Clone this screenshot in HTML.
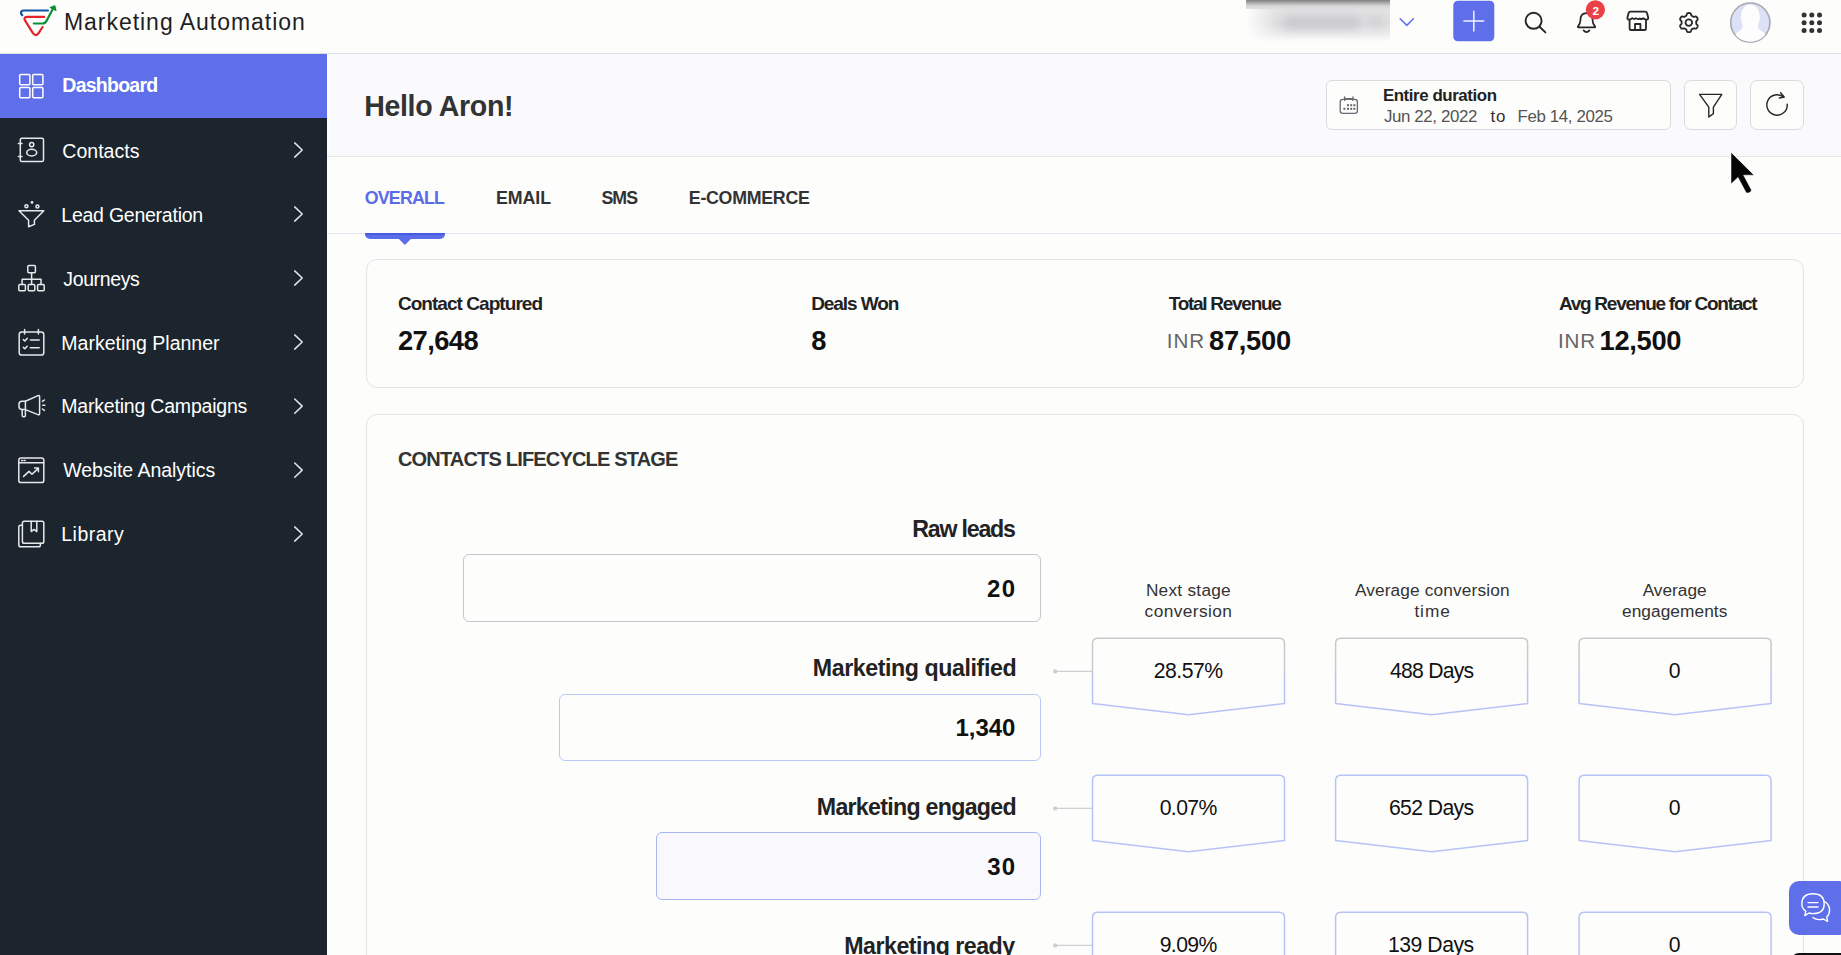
<!DOCTYPE html>
<html lang="en">
<head>
<meta charset="utf-8">
<title>Marketing Automation</title>
<style>
*{box-sizing:border-box;margin:0;padding:0}
html,body{width:1841px;height:955px;overflow:hidden;background:#fdfdfc;font-family:"Liberation Sans",sans-serif}
#app{position:relative;width:1841px;height:955px;overflow:hidden;background:#fdfdfc}
.abs{position:absolute}
.t{position:absolute;white-space:nowrap;line-height:1}
#topbar{left:0;top:0;width:1841px;height:54px;background:#fdfdfc;border-bottom:1px solid #dedfe6}
#side{left:0;top:54px;width:327px;height:901px;background:#1c252d}
#active{left:0;top:54px;width:327px;height:64px;background:#5f6fe9}
#hdr{left:327px;top:54px;width:1514px;height:103px;background:#fafafc;border-bottom:1px solid #e6e6e7;box-shadow:inset 2px 0 0 #fdfdfe}
#tabline{left:327px;top:233.2px;width:1514px;height:1.3px;background:#e6e7f5}
#tabind{left:365px;top:233px;width:80px;height:5.5px;background:linear-gradient(#4459e2 0,#4a5ee3 1.8px,#5c6de8 2.6px);border-radius:0 0 5px 5px}
#tabtri{left:398.4px;top:238.3px;width:0;height:0;border-left:6.5px solid transparent;border-right:6.5px solid transparent;border-top:6.5px solid #5b6be8}
.card{border:1.5px solid #e4e4e7;border-radius:11px;background:#fdfdfc}
#stats{left:365.5px;top:258.5px;width:1438.5px;height:129px}
#life{left:365.5px;top:414px;width:1438.5px;height:600px}
.fbox{border-radius:6px;border:1.5px solid #c5c6c9;background:#fdfdfc}
.btn{border:1.5px solid #dbdbde;border-radius:7px;background:#fdfdfc}
svg{position:absolute;overflow:visible}
</style>
</head>
<body>
<div id="app">
<div id="topbar" class="abs"></div>
<div id="side" class="abs"></div>
<div id="active" class="abs"></div>
<div id="hdr" class="abs"></div>
<div id="tabline" class="abs"></div>
<div id="tabind" class="abs"></div>
<div id="stats" class="abs card"></div>
<div id="life" class="abs card"></div>

<!-- blurred account name -->
<div class="abs" style="left:1246px;top:0;width:144px;height:42px;background:linear-gradient(to bottom,#7f7f7f 0,#adadad 3px,#d6d6d7 6px,#e3e3e5 10px,#dfdfe1 24px,#ececee 34px,#fdfdfc 42px);-webkit-mask-image:linear-gradient(to right,transparent 0,#000 0);"></div>
<div class="abs" style="left:1246px;top:9px;width:30px;height:34px;background:linear-gradient(to right,#fdfdfc,rgba(253,253,252,0));"></div>
<div class="abs" style="left:1282px;top:16px;width:80px;height:13px;border-radius:7px;background:#c9c9cb;filter:blur(5px)"></div>
<div class="abs" style="left:1368px;top:17px;width:16px;height:10px;border-radius:5px;background:#cfcfd1;filter:blur(4px)"></div>

<!-- date picker + buttons -->
<div class="abs btn" style="left:1325.5px;top:79.8px;width:345.5px;height:50.6px;border-radius:6px"></div>
<div class="abs btn" style="left:1684.2px;top:79.8px;width:53.3px;height:50.6px"></div>
<div class="abs btn" style="left:1750.4px;top:79.8px;width:53.3px;height:50.6px"></div>

<!-- funnel boxes -->
<div class="abs fbox" style="left:463px;top:554.4px;width:578.2px;height:67.8px"></div>
<div class="abs fbox" style="left:559.4px;top:693.5px;width:481.8px;height:67.5px;border-color:#bcc7f6"></div>
<div class="abs fbox" style="left:655.6px;top:832.2px;width:385.8px;height:67.4px;border:1.75px solid #a8b6f4;background:#f9f9fd"></div>

<!-- chat button -->
<div class="abs" style="left:1789px;top:881px;width:60px;height:53.5px;border-radius:10px;background:#5f6fe9"></div>
<div class="abs" style="left:1791px;top:952.5px;width:60px;height:20px;border-radius:8px;background:#111"></div>

<svg width="1841" height="955" viewBox="0 0 1841 955" style="left:0;top:0" fill="none" stroke-linecap="round" stroke-linejoin="round">
<defs>
<linearGradient id="gb" x1="0" y1="0" x2="0" y2="1" gradientUnits="objectBoundingBox">
<stop offset="0" stop-color="#c9c9cb"/><stop offset="0.42" stop-color="#c9cacf"/><stop offset="0.5" stop-color="#b7c3f6"/><stop offset="1" stop-color="#b7c3f6"/>
</linearGradient>
<clipPath id="avc"><circle cx="1750.3" cy="22.6" r="19.2"/></clipPath>
</defs>

<path d="M398.2 238.2H411.6L404.9 244.9Z" fill="#5c6de8" stroke="none"/>
<!-- logo -->
<g stroke-width="2.2">
<path d="M48 10.5H23.6Q21 10.5 21 13Q21 14.4 22.3 15.2" stroke="#0f54a6"/>
<path d="M44.2 16.9H27.4Q23.2 16.9 25 20.4L32.6 32.6Q35.8 37.4 38.6 33.2L42.6 27" stroke="#e3232a"/>
<path d="M33.8 23.5H42.6Q45.4 23.5 46.6 20.8L53.2 8.2" stroke="#0a8f36"/>
<path d="M50.2 7.5L54.8 5.8L56 10.4Z" stroke="#0a8f36" fill="#0a8f36" stroke-width="1.1"/>
</g>

<!-- sidebar icons -->
<g stroke="#e6e8ea" stroke-width="1.5">
<!-- dashboard -->
<g stroke="#ffffff"><rect x="19.7" y="74.6" width="10.2" height="10.2" rx="1"/><rect x="32.7" y="74.6" width="10.2" height="10.2" rx="1"/><rect x="19.7" y="87.6" width="10.2" height="10.2" rx="1"/><rect x="32.7" y="87.6" width="10.2" height="10.2" rx="1"/></g>
<!-- contacts -->
<rect x="20.3" y="138.2" width="23.2" height="23.4" rx="1.6"/>
<path d="M18.4 143.4h3.6M18.4 156.4h3.6"/>
<circle cx="31.7" cy="144.6" r="2.1"/>
<ellipse cx="31.7" cy="152.6" rx="5" ry="3.3"/>
<!-- lead gen funnel -->
<path d="M19 210.8H43.8L34.4 220.2V224.4L28.6 226.8V220.2Z"/>
<circle cx="26.4" cy="206.3" r="1.5"/><circle cx="37.4" cy="206.5" r="1.5"/><circle cx="32" cy="202.4" r="0.7" fill="#e6e8ea"/>
<!-- journeys -->
<rect x="27.8" y="265.6" width="7.6" height="7.2" rx="1"/>
<rect x="18.8" y="284.4" width="6.6" height="6.4" rx="1"/><rect x="28.2" y="284.4" width="6.6" height="6.4" rx="1"/><rect x="37.6" y="284.4" width="6.6" height="6.4" rx="1"/>
<path d="M31.6 272.8V284.4M22.1 284.4V279.2H41V284.4"/>
<!-- planner -->
<rect x="19.2" y="332" width="24.6" height="23" rx="2.6"/>
<path d="M24.6 329.6V334M38.4 329.6V334"/>
<path d="M23.4 339.6l1.4 1.4l2.4-2.6M23.4 347.4l1.4 1.4l2.4-2.6M30.4 340h8.8M30.4 347.8h8.8"/>
<!-- campaigns megaphone -->
<path d="M25.4 401.2L38 395.6Q39.6 395 39.6 396.8V413.4Q39.6 415.2 38 414.6L25.4 409.6Z"/>
<path d="M25.4 401.2H22Q19 401.2 19 404.2V406.6Q19 409.6 22 409.6H25.4"/>
<path d="M22.2 409.6V415.6Q22.2 416.8 23.4 416.8H24.2Q25.4 416.8 25.4 415.6V409.6"/>
<path d="M42.4 401.4L44.4 400M42.8 405.2H44.8M42.4 409L44.4 410.4"/>
<!-- analytics -->
<rect x="18.8" y="458" width="25" height="24.6" rx="2.2"/>
<path d="M18.8 462.8H43.8M21.6 460.4h1M24.2 460.4h1"/>
<path d="M23.6 476.4L29 471.4L32 474.2L38.2 468.4M34.6 468H38.4V471.8"/>
<!-- library -->
<path d="M22.4 525.2H20.6Q18.8 525.2 18.8 527V545Q18.8 546.8 20.6 546.8H38.6Q40.4 546.8 40.4 545V543.2"/>
<rect x="22.4" y="521.2" width="21.4" height="22" rx="1.8"/>
<path d="M31.2 521.2V531.6L34 529.4L36.8 531.6V521.2"/>
</g>

<!-- sidebar chevrons -->
<g stroke="#e3e5e7" stroke-width="1.5">
<path d="M294.7 142.9L302.2 150.0L294.7 157.1"/>
<path d="M294.7 206.9L302.2 214.0L294.7 221.1"/>
<path d="M294.7 270.9L302.2 278.0L294.7 285.1"/>
<path d="M294.7 334.9L302.2 342.0L294.7 349.1"/>
<path d="M294.7 399.0L302.2 406.1L294.7 413.2"/>
<path d="M294.7 463.0L302.2 470.1L294.7 477.2"/>
<path d="M294.7 526.9L302.2 534.0L294.7 541.1"/>
</g>

<!-- topbar icons -->
<path d="M1400.2 18.8L1406.8 25.4L1413.4 18.8" stroke="#6474ea" stroke-width="1.6"/>
<rect x="1453.3" y="0.8" width="41" height="40.5" rx="4.5" fill="#5f6fe9"/>
<path d="M1473.8 11.2V31M1463.9 21.1H1483.7" stroke="#f4f5ff" stroke-width="1.5"/>
<circle cx="1533.6" cy="20.8" r="8" stroke="#262626" stroke-width="1.9"/>
<path d="M1539.6 26.8L1545.4 32.4" stroke="#262626" stroke-width="1.9"/>
<!-- bell -->
<path d="M1578.4 27.4H1594.6Q1595.6 27.4 1595 26.4Q1592.6 23.6 1592.6 20.4Q1592.6 13.2 1586.5 13.2Q1580.4 13.2 1580.4 20.4Q1580.4 23.6 1578 26.4Q1577.4 27.4 1578.4 27.4Z" stroke="#262626" stroke-width="1.7"/>
<path d="M1583.6 30.4Q1586.5 34 1589.4 30.4" stroke="#262626" stroke-width="1.7"/>
<circle cx="1595.4" cy="9.8" r="9.6" fill="#ea4048"/>
<!-- store -->
<g stroke="#262626" stroke-width="1.8">
<path d="M1630.6 11.6H1645Q1646.6 11.6 1647 13L1648.2 17.6Q1648.4 19.4 1646.8 19.6Q1644.6 19.8 1643.2 18.2Q1641.8 19.8 1639.8 18.4Q1637.8 19.8 1636 18.2Q1634.2 19.8 1632.4 18.2Q1630.8 19.8 1628.8 19.6Q1627.2 19.4 1627.4 17.6L1628.6 13Q1629 11.6 1630.6 11.6Z"/>
<path d="M1629.6 20.2V28.4Q1629.6 30 1631.2 30H1644.4Q1646 30 1646 28.4V20.2"/>
<path d="M1635 30V24H1640.4V30"/>
</g>
<!-- gear -->
<g stroke="#262626" stroke-width="1.8">
<path id="gear" d="M1696.20 22.60L1696.20 22.22L1696.20 21.83L1696.24 21.44L1696.48 20.99L1697.06 20.41L1697.60 19.77L1697.73 19.21L1697.64 18.71L1697.45 18.24L1697.21 17.80L1696.95 17.38L1696.64 16.98L1696.25 16.64L1695.70 16.48L1694.88 16.62L1694.09 16.84L1693.58 16.82L1693.21 16.66L1692.88 16.47L1692.55 16.28L1692.22 16.09L1691.88 15.90L1691.56 15.66L1691.30 15.23L1691.09 14.44L1690.80 13.65L1690.38 13.25L1689.90 13.09L1689.40 13.02L1688.90 13.00L1688.40 13.02L1687.90 13.09L1687.42 13.25L1687.00 13.65L1686.71 14.44L1686.50 15.23L1686.24 15.66L1685.92 15.90L1685.58 16.09L1685.25 16.28L1684.92 16.47L1684.59 16.66L1684.22 16.82L1683.71 16.84L1682.92 16.62L1682.10 16.48L1681.55 16.64L1681.16 16.98L1680.85 17.38L1680.59 17.80L1680.35 18.24L1680.16 18.71L1680.07 19.21L1680.20 19.77L1680.74 20.41L1681.32 20.99L1681.56 21.44L1681.60 21.83L1681.60 22.22L1681.60 22.60L1681.60 22.98L1681.60 23.37L1681.56 23.76L1681.32 24.21L1680.74 24.79L1680.20 25.43L1680.07 25.99L1680.16 26.49L1680.35 26.96L1680.59 27.40L1680.85 27.82L1681.16 28.22L1681.55 28.56L1682.10 28.72L1682.92 28.58L1683.71 28.36L1684.22 28.38L1684.59 28.54L1684.92 28.73L1685.25 28.92L1685.58 29.11L1685.92 29.30L1686.24 29.54L1686.50 29.97L1686.71 30.76L1687.00 31.55L1687.42 31.95L1687.90 32.11L1688.40 32.18L1688.90 32.20L1689.40 32.18L1689.90 32.11L1690.38 31.95L1690.80 31.55L1691.09 30.76L1691.30 29.97L1691.56 29.54L1691.88 29.30L1692.22 29.11L1692.55 28.92L1692.88 28.73L1693.21 28.54L1693.58 28.38L1694.09 28.36L1694.88 28.58L1695.70 28.72L1696.25 28.56L1696.64 28.22L1696.95 27.82L1697.21 27.40L1697.45 26.96L1697.64 26.49L1697.73 25.99L1697.60 25.43L1697.06 24.79L1696.48 24.21L1696.24 23.76L1696.20 23.37L1696.20 22.98Z"/>
<circle cx="1688.8" cy="22.6" r="3.3"/>
</g>
<!-- avatar -->
<circle cx="1750.3" cy="22.6" r="19.6" fill="#dde1f8" stroke="#a9a9ad" stroke-width="1.6"/>
<g clip-path="url(#avc)" fill="#fdfdfe" stroke="none">
<ellipse cx="1750.3" cy="17" rx="9.6" ry="12.4"/>
<path d="M1742.6 24Q1743.6 29 1738.6 31.4Q1734 33.4 1733 45H1768Q1767 33.4 1762.2 31.4Q1757 29 1758 24Z"/>
</g>
<!-- 9 dots -->
<g fill="#333" stroke="none">
<circle cx="1804.1" cy="15.1" r="2.5"/><circle cx="1811.8" cy="15.1" r="2.5"/><circle cx="1819.5" cy="15.1" r="2.5"/>
<circle cx="1804.1" cy="22.7" r="2.5"/><circle cx="1811.8" cy="22.7" r="2.5"/><circle cx="1819.5" cy="22.7" r="2.5"/>
<circle cx="1804.1" cy="30.4" r="2.5"/><circle cx="1811.8" cy="30.4" r="2.5"/><circle cx="1819.5" cy="30.4" r="2.5"/>
</g>

<!-- calendar -->
<g stroke="#666a6e" stroke-width="1.3">
<rect x="1340.2" y="99.4" width="17.2" height="14" rx="2.6"/>
<path d="M1344.6 96.8V100.4M1353 96.8V100.4M1344.6 98.6H1353"/>
</g>
<g fill="#666a6e" stroke="none">
<rect x="1347" y="104.2" width="2" height="2"/><rect x="1350.2" y="104.2" width="2" height="2"/><rect x="1353.4" y="104.2" width="2" height="2"/>
<rect x="1343.4" y="107.8" width="2" height="2"/><rect x="1347" y="107.8" width="2" height="2"/><rect x="1350.2" y="107.8" width="2" height="2"/><rect x="1353.4" y="107.8" width="2" height="2"/>
</g>
<!-- filter -->
<path d="M1699.6 94.4H1721.8L1713.4 107.2V113.6L1708.8 117V107.2Z" stroke="#262626" stroke-width="1.4"/>
<!-- refresh -->
<path d="M1783.6 97.2A10.2 10.2 0 1 0 1787.2 104.2" stroke="#262626" stroke-width="1.4"/>
<path d="M1780.6 92.8L1784.2 97L1779.4 98" stroke="#262626" stroke-width="1.4"/>

<!-- cursor -->
<path d="M1731 152.4V184L1738 177.4L1746 192.6Q1747 193.6 1749.6 192.6Q1751.8 191.4 1751.4 189.8L1743.6 175.2H1754Z" fill="#050505" stroke="#ffffff" stroke-opacity="0.55" stroke-width="1" stroke-linejoin="miter"/>

<!-- connectors -->
<g stroke="#d0d0d2" stroke-width="1.3">
<path d="M1055.3 671.4H1092.5M1055.3 808.4H1092.5M1055.3 945.4H1092.5"/>
</g>
<g fill="#cfcfd1" stroke="none"><circle cx="1055.3" cy="671.4" r="2.2"/><circle cx="1055.3" cy="808.4" r="2.2"/><circle cx="1055.3" cy="945.4" r="2.2"/></g>

<!-- arrow boxes -->
<g stroke-width="1.5" fill="#fdfdfc" stroke-linejoin="round">
<g stroke="url(#gb)">
<path d="M1092.5 643.5Q1092.5 638.2 1097.8 638.2H1279.2Q1284.5 638.2 1284.5 643.5V703.6L1188.5 714.8L1092.5 703.6Z"/>
<path d="M1335.6 643.5Q1335.6 638.2 1340.9 638.2H1522.3Q1527.6 638.2 1527.6 643.5V703.6L1431.6 714.8L1335.6 703.6Z"/>
<path d="M1579.1 643.5Q1579.1 638.2 1584.4 638.2H1765.8Q1771.1 638.2 1771.1 643.5V703.6L1675.1 714.8L1579.1 703.6Z"/>
</g>
<g stroke="#b7c3f6">
<path d="M1092.5 780.5Q1092.5 775.2 1097.8 775.2H1279.2Q1284.5 775.2 1284.5 780.5V840.6L1188.5 851.8L1092.5 840.6Z"/>
<path d="M1335.6 780.5Q1335.6 775.2 1340.9 775.2H1522.3Q1527.6 775.2 1527.6 780.5V840.6L1431.6 851.8L1335.6 840.6Z"/>
<path d="M1579.1 780.5Q1579.1 775.2 1584.4 775.2H1765.8Q1771.1 775.2 1771.1 780.5V840.6L1675.1 851.8L1579.1 840.6Z"/>
<path d="M1092.5 917.5Q1092.5 912.2 1097.8 912.2H1279.2Q1284.5 912.2 1284.5 917.5V977.6L1188.5 988.8L1092.5 977.6Z"/>
<path d="M1335.6 917.5Q1335.6 912.2 1340.9 912.2H1522.3Q1527.6 912.2 1527.6 917.5V977.6L1431.6 988.8L1335.6 977.6Z"/>
<path d="M1579.1 917.5Q1579.1 912.2 1584.4 912.2H1765.8Q1771.1 912.2 1771.1 917.5V977.6L1675.1 988.8L1579.1 977.6Z"/>
</g>
</g>

<!-- chat icon -->
<g stroke="#ffffff" stroke-width="1.4" fill="#5f6fe9">
<path d="M1822.6 900.6Q1829.6 903.6 1829.6 910Q1829.6 914.4 1826.8 917L1827.6 921.4L1823.4 919Q1821.4 919.6 1819.4 919.6Q1815.6 919.6 1813 917.6"/>
<path d="M1813 893.8Q1824.2 893.8 1824.2 904Q1824.2 913.6 1813 913.6Q1811 913.6 1809 913L1804.8 915.6L1805.8 911.2Q1801.8 908.4 1801.8 904Q1801.8 893.8 1813 893.8Z"/>
<path d="M1808 902.6H1818M1808 907H1818" fill="none"/>
</g>
</svg>


<div class="t " style="left:63.90px;top:11px;font-size:23px;font-weight:400;color:#1f1f1f;letter-spacing:0.974px;">Marketing Automation</div>
<div class="t " style="left:62.30px;top:76px;font-size:19.5px;font-weight:700;color:#ffffff;letter-spacing:-0.750px;">Dashboard</div>
<div class="t " style="left:62.30px;top:142px;font-size:19.5px;font-weight:400;color:#ffffff;letter-spacing:0.029px;">Contacts</div>
<div class="t " style="left:61.30px;top:206px;font-size:19.5px;font-weight:400;color:#ffffff;letter-spacing:-0.243px;">Lead Generation</div>
<div class="t " style="left:63.30px;top:270px;font-size:19.5px;font-weight:400;color:#ffffff;letter-spacing:-0.371px;">Journeys</div>
<div class="t " style="left:61.30px;top:334px;font-size:19.5px;font-weight:400;color:#ffffff;">Marketing Planner</div>
<div class="t " style="left:61.30px;top:397px;font-size:19.5px;font-weight:400;color:#ffffff;letter-spacing:-0.200px;">Marketing Campaigns</div>
<div class="t " style="left:63.30px;top:461px;font-size:19.5px;font-weight:400;color:#ffffff;letter-spacing:-0.037px;">Website Analytics</div>
<div class="t " style="left:61.30px;top:525px;font-size:19.5px;font-weight:400;color:#ffffff;letter-spacing:0.483px;">Library</div>
<div class="t " style="left:364.20px;top:92px;font-size:28.6px;font-weight:700;color:#333;letter-spacing:-0.370px;">Hello Aron!</div>
<div class="t " style="left:1382.90px;top:88px;font-size:16.9px;font-weight:700;color:#222;letter-spacing:-0.429px;">Entire duration</div>
<div class="t " style="left:1383.90px;top:109px;font-size:16.9px;font-weight:400;color:#555;letter-spacing:-0.382px;">Jun 22, 2022</div>
<div class="t " style="left:1490.50px;top:109px;font-size:16.9px;font-weight:400;color:#333;letter-spacing:0.900px;">to</div>
<div class="t " style="left:1517.50px;top:109px;font-size:16.9px;font-weight:400;color:#555;letter-spacing:-0.382px;">Feb 14, 2025</div>
<div class="t " style="left:364.75px;top:190px;font-size:17.8px;font-weight:700;color:#5b6be8;letter-spacing:-0.792px;">OVERALL</div>
<div class="t " style="left:496.00px;top:190px;font-size:17.8px;font-weight:700;color:#333;letter-spacing:-0.062px;">EMAIL</div>
<div class="t " style="left:601.50px;top:190px;font-size:17.8px;font-weight:700;color:#333;letter-spacing:-1.000px;">SMS</div>
<div class="t " style="left:688.80px;top:190px;font-size:17.8px;font-weight:700;color:#333;letter-spacing:-0.267px;">E-COMMERCE</div>
<div class="t " style="left:397.90px;top:294px;font-size:19px;font-weight:700;color:#222;letter-spacing:-0.947px;">Contact Captured</div>
<div class="t " style="left:811.20px;top:294px;font-size:19px;font-weight:700;color:#222;letter-spacing:-1.075px;">Deals Won</div>
<div class="t " style="left:1168.80px;top:294px;font-size:19px;font-weight:700;color:#222;letter-spacing:-1.283px;">Total Revenue</div>
<div class="t " style="left:1558.90px;top:294px;font-size:19px;font-weight:700;color:#222;letter-spacing:-1.250px;">Avg Revenue for Contact</div>
<div class="t " style="left:397.90px;top:327px;font-size:27.3px;font-weight:700;color:#111;letter-spacing:-0.560px;">27,648</div>
<div class="t " style="left:811.20px;top:327px;font-size:27.3px;font-weight:700;color:#111;">8</div>
<div class="t " style="left:1166.80px;top:331px;font-size:20.6px;font-weight:400;color:#666;letter-spacing:0.900px;">INR</div>
<div class="t " style="left:1209.00px;top:327px;font-size:27.3px;font-weight:700;color:#111;letter-spacing:-0.280px;">87,500</div>
<div class="t " style="left:1557.90px;top:331px;font-size:20.6px;font-weight:400;color:#666;letter-spacing:0.900px;">INR</div>
<div class="t " style="left:1599.60px;top:327px;font-size:27.3px;font-weight:700;color:#111;letter-spacing:-0.320px;">12,500</div>
<div class="t " style="left:397.90px;top:449px;font-size:20px;font-weight:700;color:#333;letter-spacing:-0.813px;">CONTACTS LIFECYCLE STAGE</div>
<div class="t " style="left:912.30px;top:518px;font-size:23.2px;font-weight:700;color:#222;letter-spacing:-1.225px;">Raw leads</div>
<div class="t " style="left:812.80px;top:657px;font-size:23.2px;font-weight:700;color:#222;letter-spacing:-0.417px;">Marketing qualified</div>
<div class="t " style="left:816.80px;top:796px;font-size:23.2px;font-weight:700;color:#222;letter-spacing:-0.719px;">Marketing engaged</div>
<div class="t " style="left:844.30px;top:935px;font-size:23.2px;font-weight:700;color:#222;letter-spacing:-0.500px;">Marketing ready</div>
<div class="t " style="left:986.90px;top:577px;font-size:24px;font-weight:700;color:#111;letter-spacing:1.400px;">20</div>
<div class="t " style="left:955.60px;top:716px;font-size:24px;font-weight:700;color:#111;letter-spacing:-0.075px;">1,340</div>
<div class="t " style="left:987.30px;top:855px;font-size:24px;font-weight:700;color:#111;letter-spacing:1.000px;">30</div>
<div class="t " style="left:1145.88px;top:582px;font-size:17.3px;font-weight:400;color:#333;letter-spacing:0.250px;">Next stage</div>
<div class="t " style="left:1144.62px;top:603px;font-size:17.3px;font-weight:400;color:#333;letter-spacing:0.417px;">conversion</div>
<div class="t " style="left:1354.88px;top:582px;font-size:17.3px;font-weight:400;color:#333;letter-spacing:0.132px;">Average conversion</div>
<div class="t " style="left:1414.42px;top:603px;font-size:17.3px;font-weight:400;color:#333;letter-spacing:0.917px;">time</div>
<div class="t " style="left:1642.65px;top:582px;font-size:17.3px;font-weight:400;color:#333;letter-spacing:-0.017px;">Average</div>
<div class="t " style="left:1622.00px;top:603px;font-size:17.3px;font-weight:400;color:#333;letter-spacing:0.060px;">engagements</div>
<div class="t " style="left:1153.75px;top:660px;font-size:21.2px;font-weight:400;color:#111;letter-spacing:-0.500px;">28.57%</div>
<div class="t " style="left:1389.90px;top:660px;font-size:21.2px;font-weight:400;color:#111;letter-spacing:-0.743px;">488 Days</div>
<div class="t " style="left:1668.80px;top:660px;font-size:21.2px;font-weight:400;color:#111;">0</div>
<div class="t " style="left:1159.65px;top:797px;font-size:21.2px;font-weight:400;color:#111;letter-spacing:-0.575px;">0.07%</div>
<div class="t " style="left:1388.90px;top:797px;font-size:21.2px;font-weight:400;color:#111;letter-spacing:-0.600px;">652 Days</div>
<div class="t " style="left:1668.80px;top:797px;font-size:21.2px;font-weight:400;color:#111;">0</div>
<div class="t " style="left:1159.65px;top:934px;font-size:21.2px;font-weight:400;color:#111;letter-spacing:-0.575px;">9.09%</div>
<div class="t " style="left:1387.90px;top:934px;font-size:21.2px;font-weight:400;color:#111;letter-spacing:-0.457px;">139 Days</div>
<div class="t " style="left:1668.80px;top:934px;font-size:21.2px;font-weight:400;color:#111;">0</div>
<div class="t " style="left:1592.50px;top:6px;font-size:11.8px;font-weight:700;color:#fff;">2</div>
</div>
</body>
</html>
